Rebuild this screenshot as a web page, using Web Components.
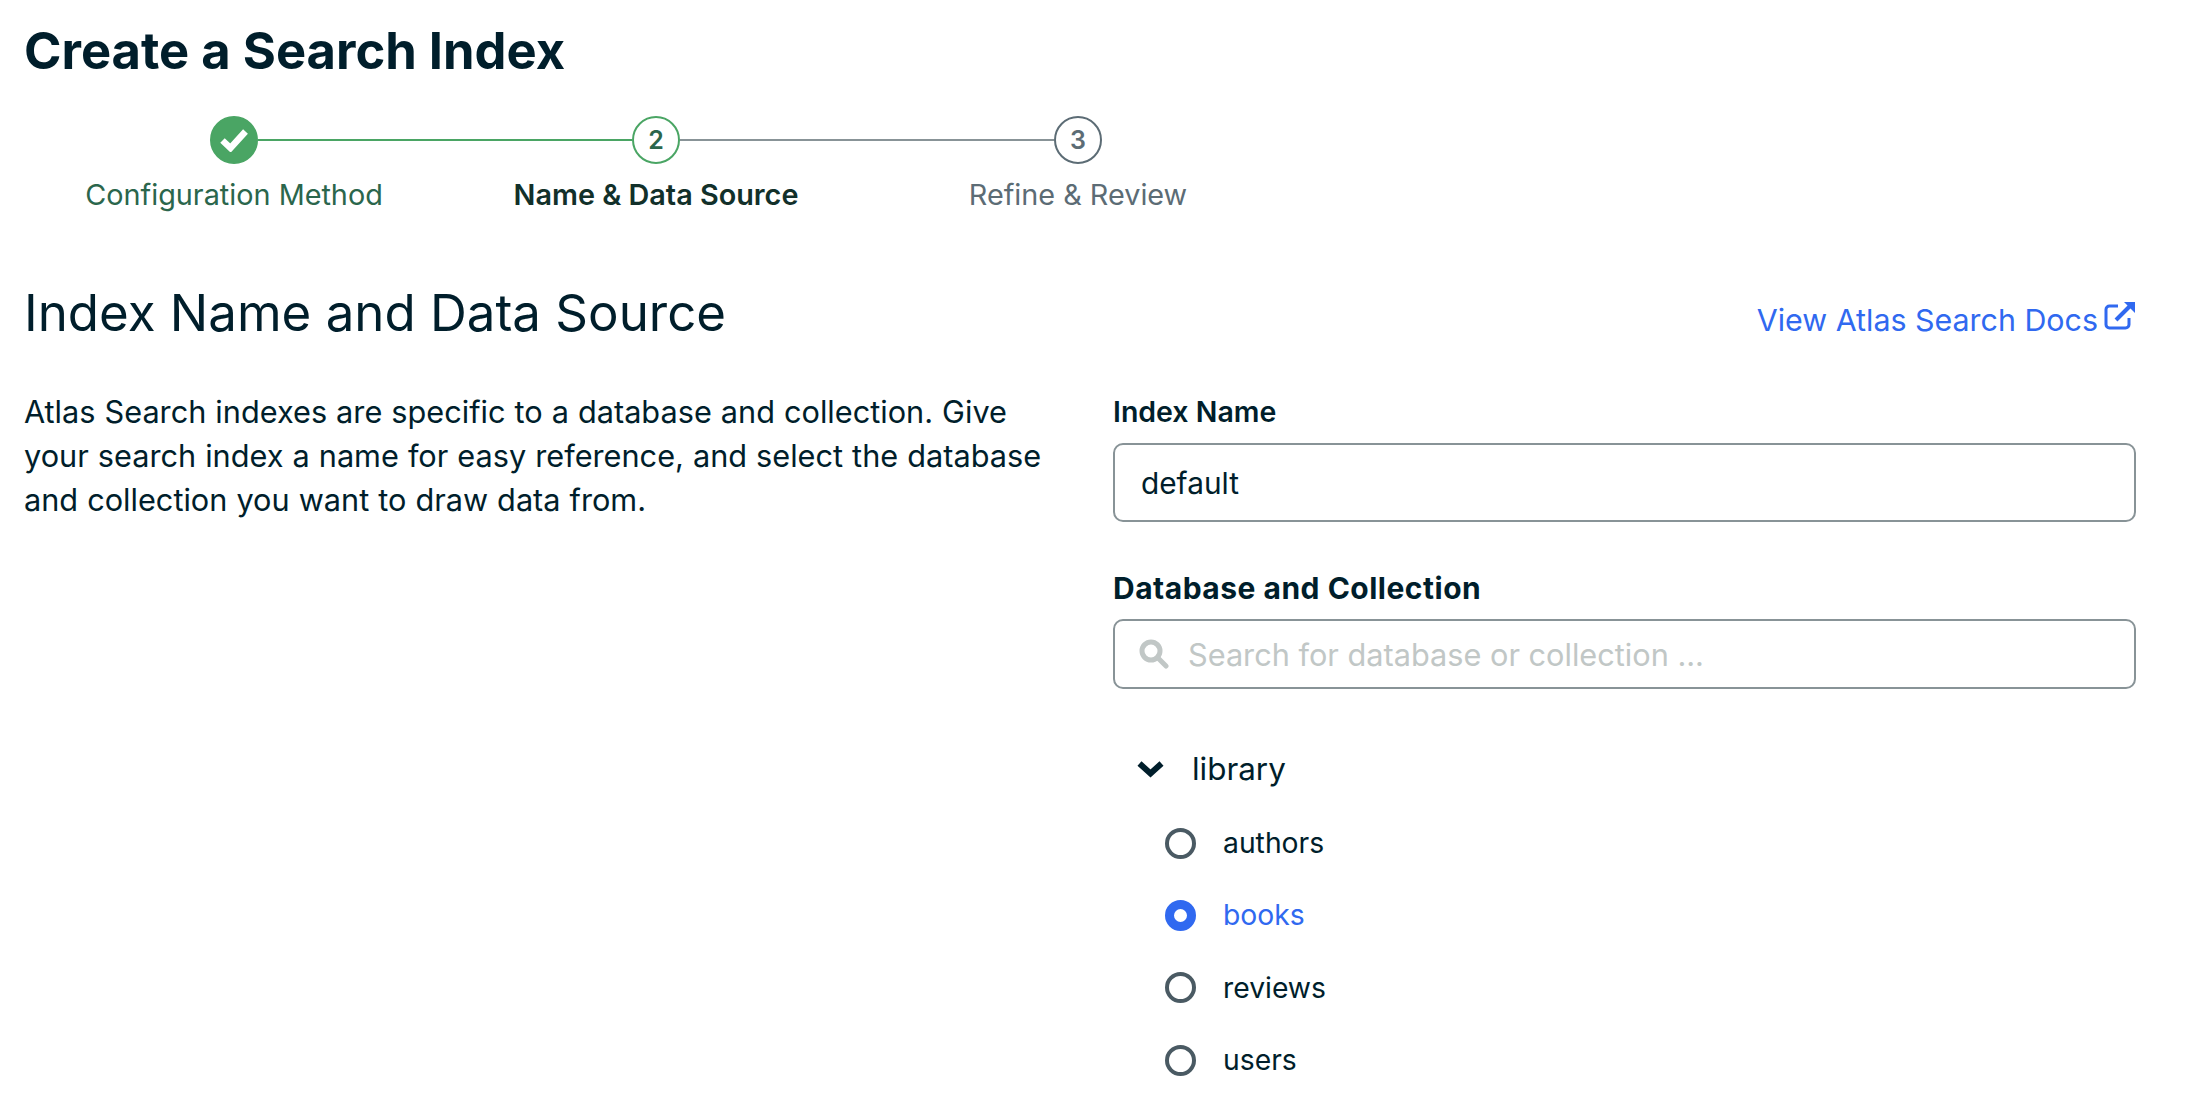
<!DOCTYPE html>
<html>
<head>
<meta charset="utf-8">
<style>
  html, body { margin: 0; background: #fff; }
  body { font-family: Inter, "Liberation Sans", sans-serif; color: #001e2b; }
</style>
</head>
<body>
<index-wizard>
  <wizard-step slot="steps" state="done" label="Configuration Method"></wizard-step>
  <wizard-step slot="steps" state="active" num="2" label="Name &amp; Data Source"></wizard-step>
  <wizard-step slot="steps" state="todo" num="3" label="Refine &amp; Review"></wizard-step>

  <field-box slot="form" label="Index Name" kind="name">default</field-box>
  <field-box slot="form" label="Database and Collection" kind="search">Search for database or collection ...</field-box>
  <collection-tree slot="form" name="library">
    <radio-row>authors</radio-row>
    <radio-row checked>books</radio-row>
    <radio-row>reviews</radio-row>
    <radio-row>users</radio-row>
  </collection-tree>
</index-wizard>

<script>
class IndexWizard extends HTMLElement {
  constructor() {
    super();
    this.attachShadow({mode: 'open'});
    this.shadowRoot.innerHTML = `
      <style>
        :host { display: block; width: 2194px; height: 1110px; box-sizing: border-box; padding: 0 58px 0 24px; overflow: hidden; }
        h1 { margin: 0; padding-top: 21px; font-size: 50.700px; line-height: 60px; font-weight: 700; }
        .steps { display: flex; margin: 35px 0 0 -1px; }
        .head { display: flex; justify-content: space-between; align-items: center; margin-top: 68px; height: 60px; }
        h2 { margin: 0; font-size: 51px; line-height: 60px; font-weight: 400; }
        a { display: flex; align-items: center; gap: 6px; color: #3069f0; font-size: 30.400px; text-decoration: none; margin-top: 14px; }
        a svg { margin-top: -8px; }
        .cols { display: flex; justify-content: space-between; margin-top: 47px; }
        p { margin: 0; width: 1040px; font-size: 30.700px; line-height: 44px; word-spacing: .4px; }
        .form { width: 1023px; flex: none; }
      </style>
      <h1>Create a Search Index</h1>
      <div class="steps"><slot name="steps"></slot></div>
      <div class="head">
        <h2>Index Name and Data Source</h2>
        <a href="#">View Atlas Search Docs
          <svg width="32" height="30" viewBox="0 0 32 30" fill="none" stroke="#3069f0">
            <path d="M14 5H5.5A3.5 3.500 0 0 0 2 8.500V23.500A3.500 3.500 0 0 0 5.500 27H21.500A3.500 3.500 0 0 0 25 23.500V17" stroke-width="3"/>
            <path d="M12 19L26 5" stroke-width="4"/>
            <path d="M20 1H31V12Z" fill="#3069f0" stroke="none"/>
          </svg>
        </a>
      </div>
      <div class="cols">
        <p>Atlas Search indexes are specific to a database and collection. Give your search index a name for easy reference, and select the database and collection you want to draw data from.</p>
        <div class="form"><slot name="form"></slot></div>
      </div>`;
  }
}

class WizardStep extends HTMLElement {
  constructor() {
    super();
    this.attachShadow({mode: 'open'});
  }
  connectedCallback() {
    const state = this.getAttribute('state');
    const mark = state === 'done'
      ? `<svg width="28" height="24" viewBox="0 0 28 24"><path d="M2.500 12.500L10.500 20L25.500 3.500" fill="none" stroke="#fff" stroke-width="6.500"/></svg>`
      : this.getAttribute('num');
    this.shadowRoot.innerHTML = `
      <style>
        :host { display: block; width: 422px; text-align: center; }
        .track { display: flex; align-items: center; height: 48px; }
        .line { flex: 1; height: 2px; }
        .circle { width: 48px; height: 48px; box-sizing: border-box; border-radius: 50%; border: 2px solid; display: flex; align-items: center; justify-content: center; font-size: 25px; font-weight: 600; flex: none; background: #fff; }
        .label { margin-top: 11px; font-size: 28.800px; line-height: 40px; white-space: nowrap; }
        :host([state=done]) .circle { background: #4aa564; border-color: #4aa564; }
        :host([state=done]) .label { color: #2b664c; }
        :host([state=done]) .right { background: #4aa564; }
        :host([state=active]) .circle { border-color: #4aa564; color: #2b664c; }
        :host([state=active]) .left { background: #4aa564; }
        :host([state=active]) .right { background: #889397; }
        :host([state=active]) .label { color: #12302a; font-weight: 600; }
        :host([state=todo]) .circle { border-color: #5c6c75; color: #5c6c75; }
        :host([state=todo]) .left { background: #889397; }
        :host([state=todo]) .label { color: #5c6c75; }
      </style>
      <div class="track"><span class="line left"></span><span class="circle">${mark}</span><span class="line right"></span></div>
      <div class="label">${this.getAttribute('label')}</div>`;
  }
}

class FieldBox extends HTMLElement {
  constructor() {
    super();
    this.attachShadow({mode: 'open'});
  }
  connectedCallback() {
    const search = this.getAttribute('kind') === 'search';
    const icon = search
      ? `<svg width="30" height="30" viewBox="0 0 30 30" fill="none" stroke="#c1c7c6"><circle cx="12" cy="12" r="9" stroke-width="5"/><path d="M18.500 18.500L27 27" stroke-width="5" stroke-linecap="round"/></svg>`
      : '';
    this.shadowRoot.innerHTML = `
      <style>
        :host { display: block; margin-top: 4px; }
        label { display: block; font-size: 28.500px; line-height: 36px; font-weight: 600; }
        .box { box-sizing: border-box; display: flex; align-items: center; gap: 19px; margin-top: 13px; height: 79px; padding: 0 26px; border: 2px solid #889397; border-radius: 10px; font-size: 29.800px; }
        :host([kind=search]) { margin-top: 48px; }
        :host([kind=search]) label { font-size: 30px; font-weight: 700; letter-spacing: .5px; }
        :host([kind=search]) .box { height: 70px; margin-top: 13px; padding-left: 24px; color: #c1c7c6; font-size: 30.700px; }
      </style>
      <label>${this.getAttribute('label')}</label>
      <div class="box">${icon}<span><slot></slot></span></div>`;
  }
}

class CollectionTree extends HTMLElement {
  constructor() {
    super();
    this.attachShadow({mode: 'open'});
  }
  connectedCallback() {
    this.shadowRoot.innerHTML = `
      <style>
        :host { display: block; margin-top: 56px; }
        .db { display: flex; align-items: center; gap: 27px; padding-left: 23px; height: 48px; font-size: 31.400px; }
        .list { display: flex; flex-direction: column; padding: 14px 0 0 52px; }
      </style>
      <div class="db">
        <svg width="29" height="18" viewBox="0 0 29 18"><path d="M3.500 3.500L14.500 13.500L25.500 3.500" fill="none" stroke="#001e2b" stroke-width="6"/></svg>
        <span>${this.getAttribute('name')}</span>
      </div>
      <div class="list"><slot></slot></div>`;
  }
}

class RadioRow extends HTMLElement {
  constructor() {
    super();
    this.attachShadow({mode: 'open'});
    this.shadowRoot.innerHTML = `
      <style>
        :host { display: flex; align-items: center; gap: 27px; height: 72.300px; font-size: 28.300px; }
        .dot { box-sizing: border-box; width: 31px; height: 31px; border-radius: 50%; border: 4.500px solid #4a5a63; flex: none; }
        :host([checked]) { color: #3069f0; }
        :host([checked]) .dot { border: 9px solid #3069f0; }
      </style>
      <span class="dot"></span><span><slot></slot></span>`;
  }
}

customElements.define('index-wizard', IndexWizard);
customElements.define('wizard-step', WizardStep);
customElements.define('field-box', FieldBox);
customElements.define('collection-tree', CollectionTree);
customElements.define('radio-row', RadioRow);
</script>
</body>
</html>
